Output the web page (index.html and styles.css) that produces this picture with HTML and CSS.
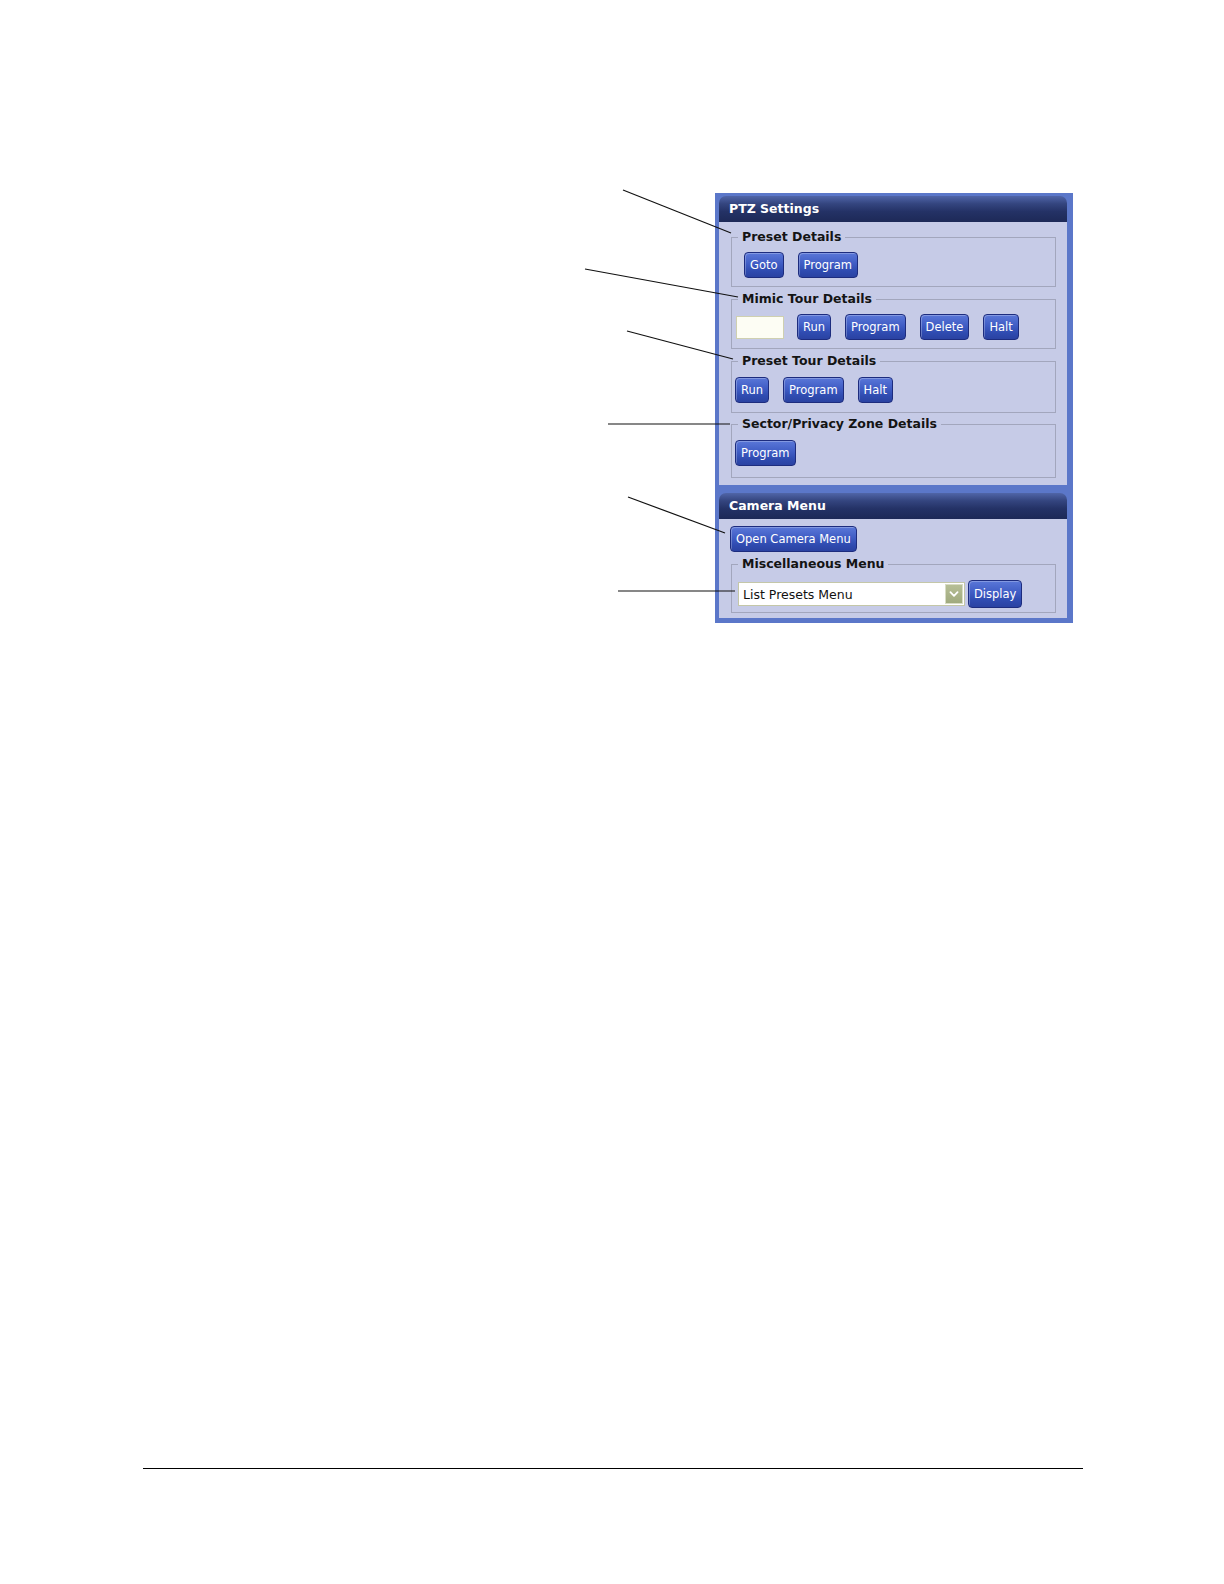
FILE: index.html
```html
<!DOCTYPE html>
<html lang="en">
<head>
<meta charset="utf-8">
<title>PTZ Settings</title>
<link rel="stylesheet" href="styles.css">
</head>
<body>
<div class="page">
  <div class="ptz">
    <section class="sec">
      <div class="head">PTZ Settings</div>
      <div class="body body-ptz">
        <fieldset class="grp">
          <legend>Preset Details</legend>
          <div class="row row-preset">
            <button class="btn">Goto</button>
            <button class="btn">Program</button>
          </div>
        </fieldset>
        <fieldset class="grp">
          <legend>Mimic Tour Details</legend>
          <div class="row row-mimic">
            <span class="txt"></span>
            <button class="btn">Run</button>
            <button class="btn">Program</button>
            <button class="btn">Delete</button>
            <button class="btn">Halt</button>
          </div>
        </fieldset>
        <fieldset class="grp grp-tour">
          <legend>Preset Tour Details</legend>
          <div class="row row-deep">
            <button class="btn">Run</button>
            <button class="btn">Program</button>
            <button class="btn">Halt</button>
          </div>
        </fieldset>
        <fieldset class="grp grp-sector">
          <legend>Sector/Privacy Zone Details</legend>
          <div class="row row-deep">
            <button class="btn">Program</button>
          </div>
        </fieldset>
      </div>
    </section>
    <section class="sec">
      <div class="head">Camera Menu</div>
      <div class="body body-cam">
        <button class="btn btn-open">Open Camera Menu</button>
        <fieldset class="grp grp-misc">
          <legend>Miscellaneous Menu</legend>
          <div class="row row-misc">
            <div class="select">
              <span class="select-text">List Presets Menu</span>
              <span class="select-arrow"><svg width="18" height="20" viewBox="0 0 18 20"><path d="M5 8 L9 12 L13 8" fill="none" stroke="#ffffff" stroke-width="2" stroke-linecap="round" stroke-linejoin="round"/></svg></span>
            </div>
            <button class="btn btn-tall">Display</button>
          </div>
        </fieldset>
      </div>
    </section>
  </div>
  <div class="rule"></div>
</div>
<svg class="callouts" width="1224" height="700" viewBox="0 0 1224 700">
  <g stroke="#111" stroke-width="1.2" fill="none">
    <line x1="623" y1="190" x2="731" y2="233"/>
    <line x1="585" y1="269" x2="738" y2="297"/>
    <line x1="627" y1="331" x2="733" y2="359"/>
    <line x1="608" y1="424" x2="730" y2="424"/>
    <line x1="628" y1="497" x2="725" y2="533"/>
    <line x1="618" y1="591" x2="735" y2="591"/>
  </g>
</svg>
</body>
</html>
```

FILE: styles.css
```css
html, body {
  margin: 0;
  padding: 0;
  background: #ffffff;
}

body {
  font-family: "DejaVu Sans", Verdana, sans-serif;
  position: relative;
  width: 1224px;
  min-height: 1584px;
}

.page {
  padding-top: 193px;
}

.ptz {
  margin-left: 715px;
  width: 348px;
  padding: 3px 6px 5px 4px;
  background: #5b77c9;
  display: flex;
  flex-direction: column;
  gap: 8px;
}

.sec {
  display: flex;
  flex-direction: column;
}

.head {
  height: 26px;
  line-height: 26px;
  padding-left: 10px;
  color: #ffffff;
  font-weight: bold;
  font-size: 12.5px;
  border-radius: 7px 7px 0 0;
  background: linear-gradient(to bottom, #5065a8 0%, #34457f 30%, #243266 60%, #1d2957 100%);
}

.body {
  background: #c6cbe7;
  display: flex;
  flex-direction: column;
}

.body-ptz {
  padding: 8px 11px 7px 12px;
}

.body-cam {
  padding: 7px 11px 5px 12px;
  align-items: flex-start;
}

.grp {
  margin: 0;
  padding: 0 3px 8px 3px;
  border: 1px solid #a2a6bd;
  min-width: 0;
}

.grp + .grp {
  margin-top: 5px;
}

.grp legend {
  margin-left: 3px;
  padding: 0 4px;
  font-weight: bold;
  font-size: 12.5px;
  line-height: 14px;
  color: #141414;
}

.grp-tour {
  padding-bottom: 9px;
}

.grp-sector {
  padding-bottom: 11px;
}

.grp + .grp-sector {
  margin-top: 4px;
}

.grp-misc {
  align-self: stretch;
  margin-top: 5px;
  padding-bottom: 4px;
}

.row {
  display: flex;
  align-items: center;
  gap: 14px;
  margin-top: 8px;
}

.row-preset {
  margin-left: 9px;
}

.row-mimic {
  margin-left: 1px;
}

.row-deep {
  margin-top: 9px;
}

.row-misc {
  margin-top: 9px;
  margin-left: 3px;
  gap: 3px;
}

.btn {
  box-sizing: border-box;
  height: 26px;
  margin: 0;
  padding: 0 5px;
  font-family: "DejaVu Sans", Verdana, sans-serif;
  font-size: 11.5px;
  line-height: 24px;
  color: #ffffff;
  background: linear-gradient(to bottom, #5a77d8 0%, #3f5cc4 45%, #2f4bb0 75%, #2a42a2 100%);
  border: 1px solid #1d2c7e;
  border-radius: 4px;
  box-shadow: inset 1px 1px 0 rgba(255, 255, 255, 0.25);
  white-space: nowrap;
}

.btn-open {
  margin-left: -1px;
}

.btn-tall {
  height: 28px;
  line-height: 26px;
}

.txt {
  box-sizing: border-box;
  width: 48px;
  height: 23px;
  margin-right: -1px;
  background: #fdfdf4;
  border: 1px solid #cfd0b0;
}

.select {
  box-sizing: border-box;
  width: 227px;
  height: 24px;
  display: flex;
  align-items: center;
  justify-content: space-between;
  background: #ffffff;
  border: 1px solid #c4c7a8;
  padding: 0 1px 0 4px;
}

.select-text {
  font-family: "DejaVu Sans", Verdana, sans-serif;
  font-size: 12.5px;
  color: #111111;
}

.select-arrow {
  display: flex;
  width: 18px;
  height: 20px;
  background: linear-gradient(to bottom, #b6be96, #a0aa7e);
  border: 1px solid #d8dcc4;
  box-sizing: border-box;
}

.select-arrow svg {
  width: 16px;
  height: 18px;
}

.rule {
  margin: 845px 0 0 143px;
  width: 940px;
  height: 1px;
  background: #000000;
}

.callouts {
  position: absolute;
  left: 0;
  top: 0;
  pointer-events: none;
}
```
